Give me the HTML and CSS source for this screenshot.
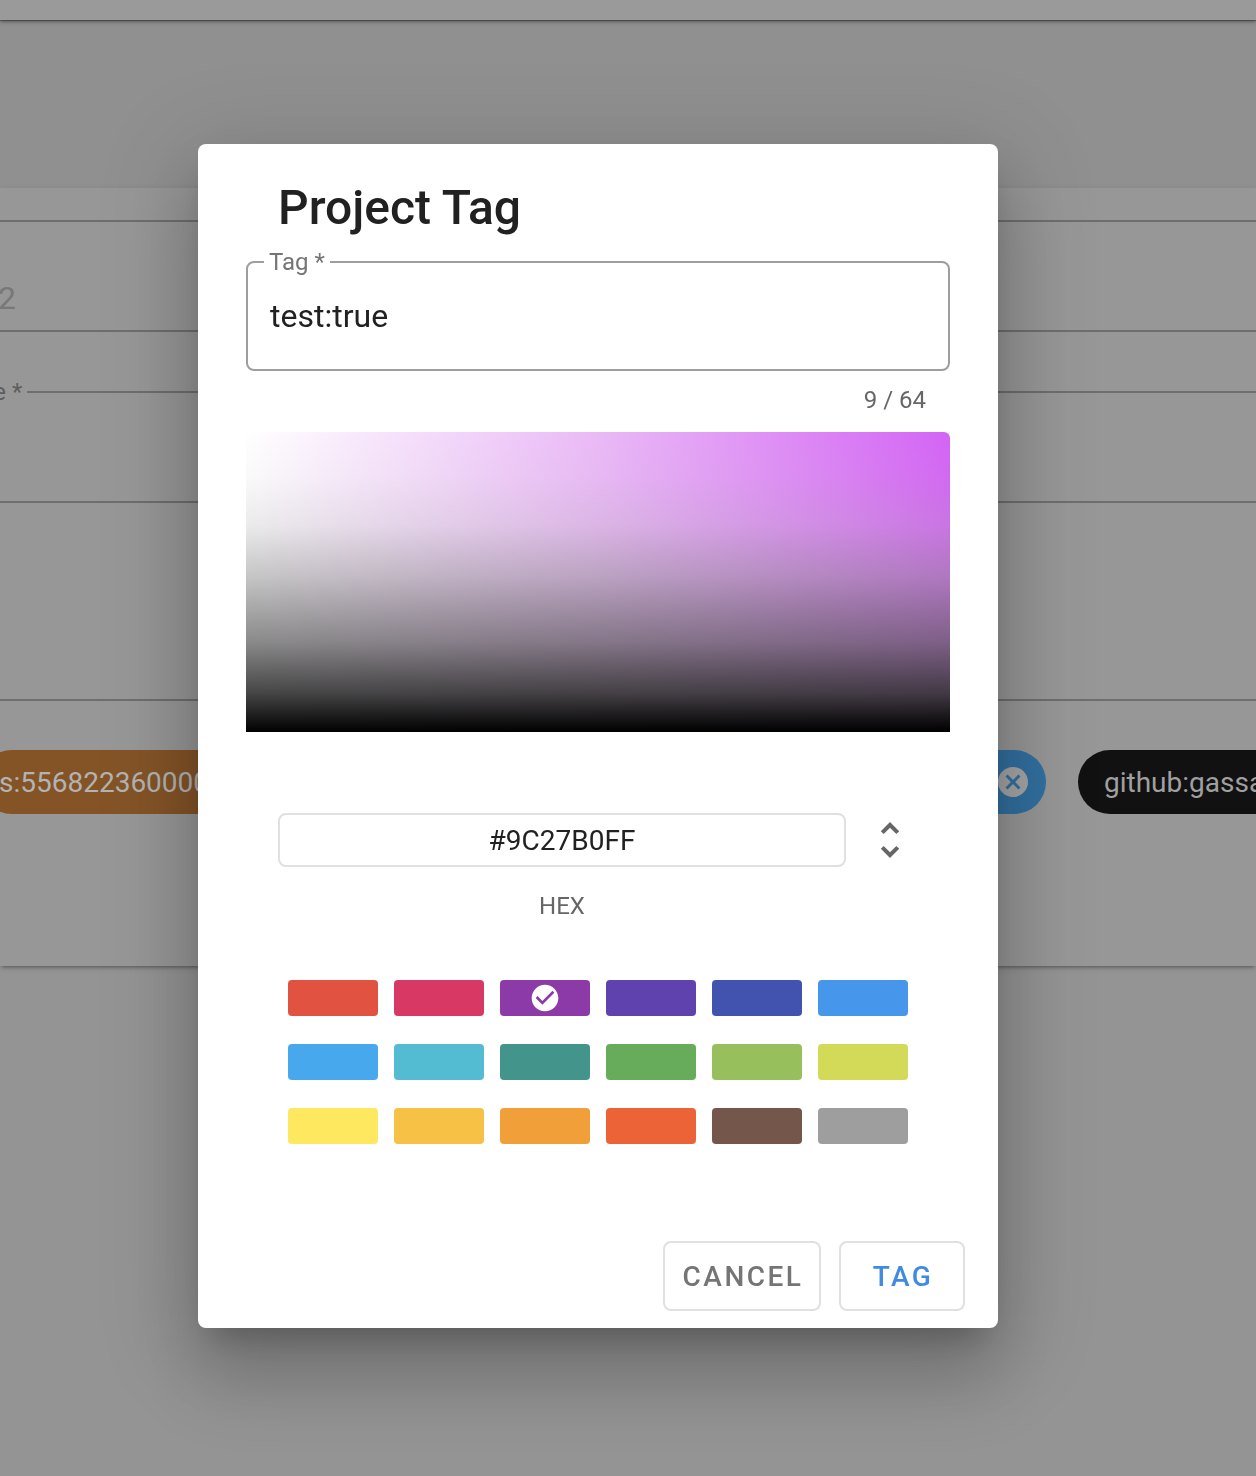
FILE: index.html
```html
<!DOCTYPE html>
<html lang="en">
<head>
<meta charset="utf-8">
<title>Project Tag</title>
<link rel="stylesheet" href="styles.css">
</head>
<body>
<div class="page">
  <header class="topbar"></header>
  <div class="band"></div>
  <section class="card">
    <div class="field-a"><span class="field-a-val">2</span></div>
    <fieldset class="field-b"><legend>Name *</legend></fieldset>
    <div class="divider"></div>
    <div class="chips">
      <div class="chip chip-orange">s:5568223600000000000</div>
      <div class="chip chip-blue">
        <svg class="chip-close" viewBox="0 0 24 24" width="36" height="36"><path d="M12,2C17.53,2 22,6.47 22,12C22,17.53 17.53,22 12,22C6.47,22 2,17.53 2,12C2,6.47 6.47,2 12,2M15.59,7L12,10.59L8.41,7L7,8.41L10.59,12L7,15.59L8.41,17L12,13.41L15.59,17L17,15.59L13.41,12L17,8.41L15.59,7Z"/></svg>
      </div>
      <div class="chip chip-black">github:gassa</div>
    </div>
  </section>
</div>

<div class="scrim">
  <div class="dialog">
    <h2 class="title">Project Tag</h2>
    <div class="form">
      <fieldset class="tag-field">
        <legend>Tag *</legend>
        <div class="tag-value">test:true</div>
      </fieldset>
      <div class="counter">9 / 64</div>
      <div class="canvas"></div>
    </div>
    <div class="edit">
      <div class="edit-row">
        <div class="hex-input">#9C27B0FF</div>
        <button class="mode-btn" type="button" aria-label="Change mode">
          <svg viewBox="0 0 24 24" width="48" height="48"><path d="M12,18.17L8.83,15L7.42,16.41L12,21L16.59,16.41L15.17,15M12,5.83L15.17,9L16.58,7.59L12,3L7.41,7.59L8.83,9L12,5.83Z"/></svg>
        </button>
      </div>
      <div class="hex-label">HEX</div>
    </div>
    <div class="swatches">
      <div class="sw sw-red"></div>
      <div class="sw sw-pink"></div>
      <div class="sw sw-purple">
        <svg viewBox="0 0 24 24" width="32" height="32"><path d="M12 2C6.5 2 2 6.5 2 12S6.5 22 12 22 22 17.5 22 12 17.5 2 12 2M10 17L5 12L6.41 10.59L10 14.17L17.59 6.58L19 8L10 17Z"/></svg>
      </div>
      <div class="sw sw-deeppurple"></div>
      <div class="sw sw-indigo"></div>
      <div class="sw sw-blue"></div>
      <div class="sw sw-lightblue"></div>
      <div class="sw sw-cyan"></div>
      <div class="sw sw-teal"></div>
      <div class="sw sw-green"></div>
      <div class="sw sw-lightgreen"></div>
      <div class="sw sw-lime"></div>
      <div class="sw sw-yellow"></div>
      <div class="sw sw-amber"></div>
      <div class="sw sw-orange"></div>
      <div class="sw sw-deeporange"></div>
      <div class="sw sw-brown"></div>
      <div class="sw sw-grey"></div>
    </div>
    <div class="actions">
      <button class="btn btn-cancel" type="button">Cancel</button>
      <button class="btn btn-tag" type="button">Tag</button>
    </div>
  </div>
</div>
</body>
</html>
```

FILE: styles.css
```css
* { box-sizing: border-box; }
html, body { margin: 0; height: 100%; }
body {
  font-family: Roboto, "Noto Sans", "Liberation Sans", sans-serif;
  background: #949494;
  overflow: hidden;
}

/* ---------- background page (under scrim) ---------- */
.page { width: 100%; }
.topbar {
  height: 20px;
  background: #9a9a9a;
  box-shadow: 0 2px 4px rgba(0,0,0,.35), 0 1px 1px rgba(0,0,0,.3);
  position: relative;
  z-index: 1;
}
.band { height: 168px; background: #909090; }
.card {
  height: 778px;
  background: #979797;
  box-shadow: 0 3px 3px -2px rgba(0,0,0,.3), 0 2px 6px rgba(0,0,0,.15);
  padding-top: 32px;
  overflow: hidden;
}
.field-a {
  height: 112px;
  border-top: 2px solid #6e6e6e;
  border-bottom: 2px solid #6e6e6e;
  padding-top: 56px;
  font-size: 32px;
  line-height: 40px;
  color: #787878;
}
.field-a-val { margin-left: -2px; }
.field-b {
  margin: 48px 0 0 -89px;
  width: calc(100% + 180px);
  height: 123px;
  border: 2px solid #6e6e6e;
  padding: 0 24px;
  min-width: 0;
}
.field-b legend {
  font-size: 24px;
  line-height: 24px;
  padding: 0 5px;
  color: #5e5e5e;
}
.divider { margin-top: 196px; height: 2px; background: #6e6e6e; }
.chips {
  margin-top: 49px;
  height: 64px;
  display: flex;
  align-items: center;
}
.chip {
  height: 64px;
  border-radius: 32px;
  display: flex;
  align-items: center;
  font-size: 28px;
  white-space: nowrap;
  overflow: hidden;
  flex-shrink: 0;
}
.chip-orange {
  margin-left: -20px;
  width: 600px;
  padding-left: 19px;
  background: #845427;
  color: #b3b3b3;
}
.chip-blue {
  margin-left: 16px;
  width: 450px;
  justify-content: flex-end;
  padding-right: 15px;
  background: #3270a0;
}
.chip-close { fill: #a6a6a6; }
.chip-black {
  margin-left: 32px;
  width: 320px;
  padding-left: 26px;
  background: #111111;
  color: #a0a0a0;
}

/* ---------- dialog ---------- */
.scrim {
  position: fixed;
  inset: 0;
  display: flex;
  justify-content: center;
  align-items: flex-start;
  padding: 144px 60px 0 0;
}
.dialog {
  width: 800px;
  background: #fff;
  border-radius: 8px;
  padding: 32px 0 17px;
  box-shadow: 0 22px 30px -14px rgba(0,0,0,.22),
              0 48px 76px 6px rgba(0,0,0,.16),
              0 18px 92px 16px rgba(0,0,0,.13);
}
.title {
  margin: 0;
  padding-left: 80px;
  font-size: 48px;
  line-height: 64px;
  font-weight: 500;
  color: #212121;
}
.form { padding: 0 48px; }
.tag-field {
  margin: 10px 0 0;
  border: 2px solid #9e9e9e;
  border-radius: 8px;
  padding: 22px 22px 33px;
  min-width: 0;
}
.tag-field legend {
  margin-left: -6px;
  padding: 0 5px;
  font-size: 24px;
  line-height: 24px;
  color: #757575;
}
.tag-value {
  font-size: 32px;
  line-height: 40px;
  color: #212121;
}
.counter {
  margin-top: 13px;
  padding-right: 24px;
  text-align: right;
  font-size: 24px;
  line-height: 32px;
  color: #666;
}
.canvas {
  margin-top: 16px;
  height: 300px;
  border-radius: 6px 6px 0 0;
  background:
    linear-gradient(to bottom,
      rgba(180,180,180,0) 0%,
      rgba(180,180,180,.065) 15%,
      rgba(170,170,170,.23) 31%,
      rgba(139,139,139,.49) 48%,
      rgba(93,93,93,.72) 70%,
      rgba(54,54,54,.92) 87%,
      rgba(0,0,0,1) 100%),
    linear-gradient(to right, #ffffff 0%, #eab9f7 50%, #d464f5 100%);
}

.edit { padding: 81px 84px 0 80px; }
.edit-row { display: flex; align-items: center; }
.hex-input {
  flex: 1;
  height: 54px;
  border: 2px solid #e0e0e0;
  border-radius: 8px;
  display: flex;
  align-items: center;
  justify-content: center;
  font-size: 28px;
  color: #212121;
}
.mode-btn {
  margin-left: 20px;
  width: 48px;
  height: 54px;
  padding: 0;
  border: 0;
  background: none;
  display: flex;
  align-items: center;
  justify-content: center;
}
.mode-btn svg { fill: #666; }
.hex-label {
  margin-top: 23px;
  padding-right: 68px;
  text-align: center;
  font-size: 24px;
  line-height: 32px;
  color: #666;
}

.swatches {
  margin-top: 58px;
  display: grid;
  grid-template-columns: repeat(6, 90px);
  gap: 28px 16px;
  justify-content: center;
}
.sw {
  height: 36px;
  border-radius: 4px;
  display: flex;
  align-items: center;
  justify-content: center;
}
.sw svg { fill: #fff; }
.sw-red { background: #e15241; }
.sw-pink { background: #d73964; }
.sw-purple { background: #8d3aa9; }
.sw-deeppurple { background: #6042ae; }
.sw-indigo { background: #4253af; }
.sw-blue { background: #4696ec; }
.sw-lightblue { background: #48a8ee; }
.sw-cyan { background: #53bbd2; }
.sw-teal { background: #43948a; }
.sw-green { background: #67ac5b; }
.sw-lightgreen { background: #97c05c; }
.sw-lime { background: #d2da58; }
.sw-yellow { background: #fee85f; }
.sw-amber { background: #f6c144; }
.sw-orange { background: #f19f38; }
.sw-deeporange { background: #ec6337; }
.sw-brown { background: #74574a; }
.sw-grey { background: #9e9e9e; }

.actions {
  margin-top: 97px;
  padding-right: 33px;
  display: flex;
  justify-content: flex-end;
  gap: 18px;
}
.btn {
  height: 70px;
  border: 2px solid #e0e0e0;
  border-radius: 8px;
  background: #fff;
  font-family: Roboto, "Noto Sans", sans-serif;
  font-size: 28px;
  font-weight: 500;
  letter-spacing: 2.5px;
  text-transform: uppercase;
  padding: 0 0 0 2px;
  text-align: center;
}
.btn-cancel { width: 158px; color: #757575; }
.btn-tag { width: 126px; color: #418ae3; }
```
